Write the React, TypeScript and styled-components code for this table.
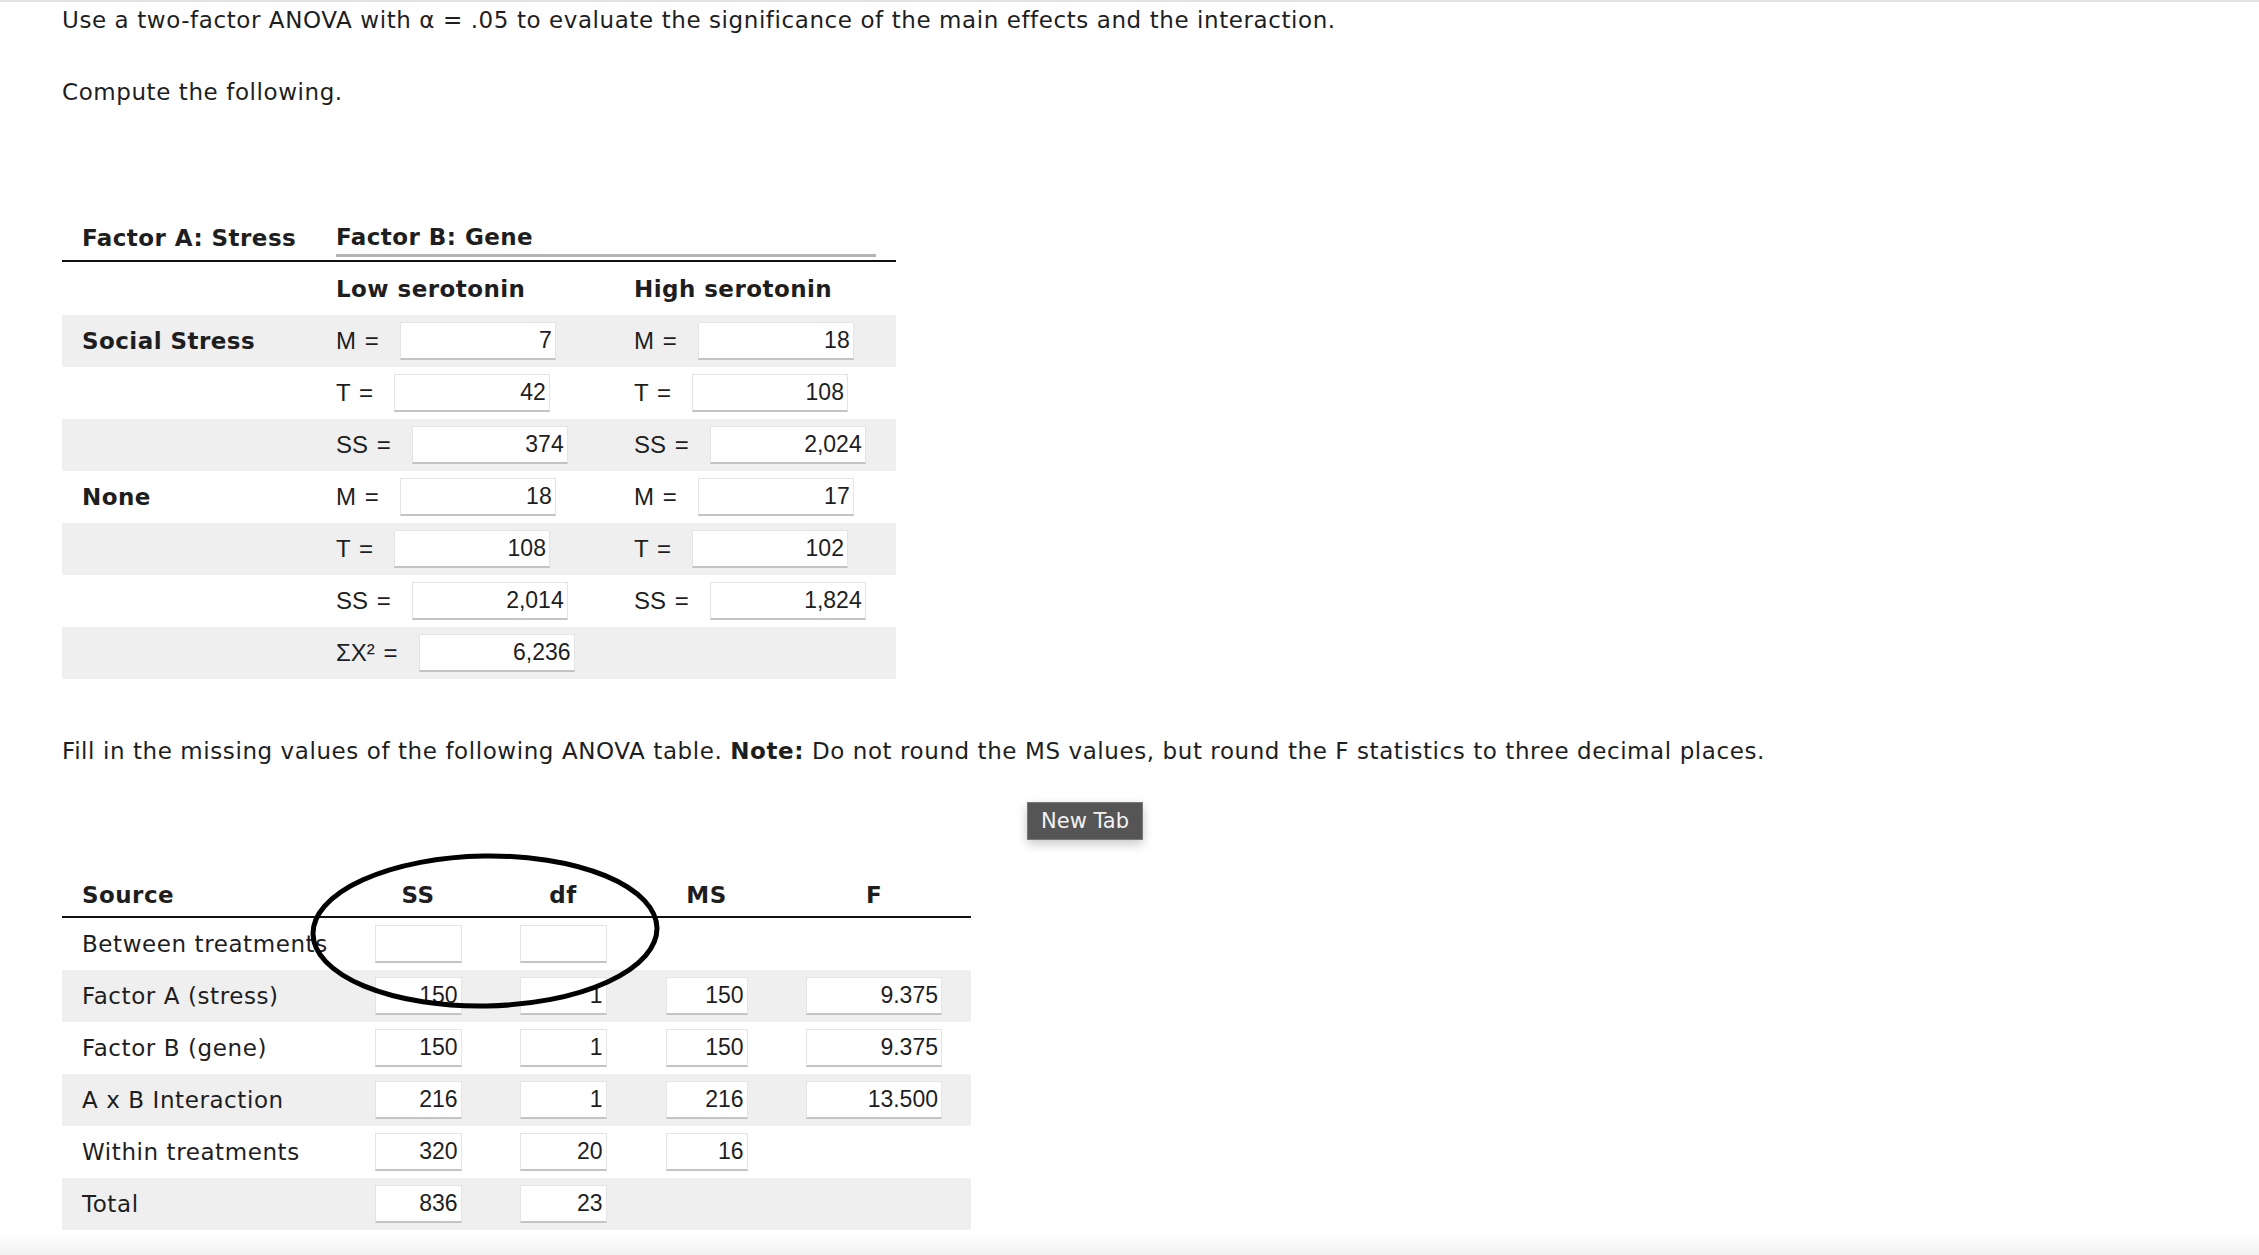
import styled, { createGlobalStyle } from "styled-components";

const GlobalStyle = createGlobalStyle`
  html, body {
    margin: 0;
    padding: 0;
    background: #fff;
  }
  body {
    font-family: "DejaVu Sans", Verdana, sans-serif;
    color: #1e1e1e;
  }
`;

const factorRows = [
  { factor: "Social Stress", label: "M =", low: "7", high: "18", labelHigh: "M =" },
  { factor: "", label: "T =", low: "42", high: "108", labelHigh: "T =" },
  { factor: "", label: "SS =", low: "374", high: "2,024", labelHigh: "SS =" },
  { factor: "None", label: "M =", low: "18", high: "17", labelHigh: "M =" },
  { factor: "", label: "T =", low: "108", high: "102", labelHigh: "T =" },
  { factor: "", label: "SS =", low: "2,014", high: "1,824", labelHigh: "SS =" },
  { factor: "", label: "ΣX² =", low: "6,236", high: null, labelHigh: "" },
];

const anovaRows = [
  { source: "Between treatments", ss: "", df: "", ms: null, f: null },
  { source: "Factor A (stress)", ss: "150", df: "1", ms: "150", f: "9.375" },
  { source: "Factor B (gene)", ss: "150", df: "1", ms: "150", f: "9.375" },
  { source: "A x B Interaction", ss: "216", df: "1", ms: "216", f: "13.500" },
  { source: "Within treatments", ss: "320", df: "20", ms: "16", f: null },
  { source: "Total", ss: "836", df: "23", ms: null, f: null },
];

const App = () => {
  return (
    <>
      <GlobalStyle />
      <Page>
        <Paragraph>
          Use a two-factor ANOVA with α = .05 to evaluate the significance of the main effects and
          the interaction.
        </Paragraph>
        <Paragraph $top={40}>Compute the following.</Paragraph>

        <FactorTable>
          <FactorHeadRow>
            <HeadCell>Factor A: Stress</HeadCell>
            <GeneHead>
              <GeneTitle>Factor B: Gene</GeneTitle>
            </GeneHead>
          </FactorHeadRow>
          <FactorSubRow>
            <span />
            <HeadCell>Low serotonin</HeadCell>
            <HeadCell>High serotonin</HeadCell>
          </FactorSubRow>
          {factorRows.map((row, i) => (
            <FactorRow key={i} $shaded={i % 2 === 0}>
              <HeadCell>{row.factor}</HeadCell>
              <ValueCell>
                <CellLabel>{row.label}</CellLabel>
                <Field $width={156} readOnly value={row.low} />
              </ValueCell>
              <ValueCell>
                {row.high !== null && (
                  <>
                    <CellLabel>{row.labelHigh}</CellLabel>
                    <Field $width={156} readOnly value={row.high} />
                  </>
                )}
              </ValueCell>
            </FactorRow>
          ))}
        </FactorTable>

        <Paragraph $top={56}>
          Fill in the missing values of the following ANOVA table. <strong>Note:</strong> Do not
          round the MS values, but round the F statistics to three decimal places.
        </Paragraph>

        <ButtonRow>
          <TabButton>New Tab</TabButton>
        </ButtonRow>

        <AnovaWrap>
          <AnovaHeadRow>
            <HeadCell>Source</HeadCell>
            <CenterHead>SS</CenterHead>
            <CenterHead>df</CenterHead>
            <CenterHead>MS</CenterHead>
            <CenterHead>F</CenterHead>
          </AnovaHeadRow>
          {anovaRows.map((row, i) => (
            <AnovaRow key={row.source} $shaded={i % 2 === 1}>
              <SourceCell>{row.source}</SourceCell>
              <CenterCell>
                <Field $width={87} readOnly value={row.ss} />
              </CenterCell>
              <CenterCell>
                <Field $width={87} readOnly value={row.df} />
              </CenterCell>
              <CenterCell>
                {row.ms !== null && <Field $width={82} readOnly value={row.ms} />}
              </CenterCell>
              <CenterCell>
                {row.f !== null && <Field $width={136} readOnly value={row.f} />}
              </CenterCell>
            </AnovaRow>
          ))}
          <Circle width="364" height="164" viewBox="0 0 364 164">
            <ellipse
              cx="182"
              cy="82"
              rx="172"
              ry="75"
              fill="none"
              stroke="#000"
              strokeWidth="5"
              transform="rotate(-1 182 82)"
            />
          </Circle>
        </AnovaWrap>
        <BottomFade />
      </Page>
    </>
  );
};

const Page = styled.div`
  border-top: 2px solid #e2e2e2;
  padding: 0 62px;
  min-height: 1253px;
  display: flex;
  flex-direction: column;
`;

const Paragraph = styled.p<{ $top?: number }>`
  margin: ${({ $top }) => $top ?? 2}px 0 0;
  font-size: 23px;
  letter-spacing: 0.58px;
  line-height: 32px;
  white-space: nowrap;

  strong {
    font-weight: bold;
  }
`;

const FactorTable = styled.div`
  margin-top: 108px;
  width: 834px;
`;

const factorCols = `grid-template-columns: 274px 298px 262px;`;

const FactorHeadRow = styled.div`
  display: grid;
  grid-template-columns: 274px 560px;
  height: 46px;
  align-items: center;
  border-bottom: 2px solid #111;
  box-sizing: border-box;
`;

const HeadCell = styled.div`
  font-weight: bold;
  font-size: 23px;
  letter-spacing: 0.45px;
  padding-left: 20px;
  white-space: nowrap;
`;

const GeneHead = styled.div`
  align-self: end;
  padding-bottom: 3px;
  padding-right: 20px;
`;

const GeneTitle = styled.div`
  font-weight: bold;
  font-size: 23px;
  letter-spacing: 0.45px;
  padding-bottom: 4px;
  border-bottom: 3px solid #b4b4b4;
`;

const FactorSubRow = styled.div`
  display: grid;
  ${factorCols}
  height: 53px;
  align-items: center;

  & > div {
    padding-left: 0;
  }
`;

const FactorRow = styled.div<{ $shaded: boolean }>`
  display: grid;
  ${factorCols}
  height: 52px;
  align-items: center;
  background: ${({ $shaded }) => ($shaded ? "#efefef" : "transparent")};
`;

const ValueCell = styled.div`
  display: flex;
  align-items: center;
  gap: 21px;
`;

const CellLabel = styled.span`
  font-family: "Liberation Sans", Arial, sans-serif;
  font-size: 24px;
  word-spacing: 2px;
  white-space: nowrap;
`;

const Field = styled.input<{ $width: number }>`
  width: ${({ $width }) => $width}px;
  height: 38px;
  box-sizing: border-box;
  border: 1px solid #e4e4e4;
  border-bottom: 2px solid #c4c4c4;
  background: #fff;
  text-align: right;
  padding: 0 3px 0 0;
  margin: 0;
  font-family: "Liberation Sans", Arial, sans-serif;
  font-size: 23px;
  color: #1e1e1e;
  outline: none;
`;

const ButtonRow = styled.div`
  display: flex;
  padding-left: 965px;
  margin-top: 35px;
`;

const TabButton = styled.button`
  height: 38px;
  padding: 0 13px;
  background: #555;
  color: #f2f2f2;
  border: 1px solid #777;
  box-shadow: 0 4px 10px rgba(0, 0, 0, 0.22);
  font-family: "DejaVu Sans", Verdana, sans-serif;
  font-size: 21px;
  cursor: pointer;
`;

const AnovaWrap = styled.div`
  position: relative;
  margin-top: 34px;
  width: 909px;
`;

const anovaCols = `grid-template-columns: 284px 144px 146px 141px 194px;`;

const AnovaHeadRow = styled.div`
  display: grid;
  ${anovaCols}
  height: 44px;
  align-items: center;
  border-bottom: 2px solid #111;
  box-sizing: border-box;
`;

const CenterHead = styled.div`
  font-weight: bold;
  font-size: 23px;
  letter-spacing: 0.45px;
  text-align: center;
`;

const AnovaRow = styled.div<{ $shaded: boolean }>`
  display: grid;
  ${anovaCols}
  height: 52px;
  align-items: center;
  background: ${({ $shaded }) => ($shaded ? "#efefef" : "transparent")};
`;

const SourceCell = styled.div`
  font-size: 23px;
  letter-spacing: 0.58px;
  padding-left: 20px;
  white-space: nowrap;
`;

const CenterCell = styled.div`
  display: flex;
  justify-content: center;
`;

const Circle = styled.svg`
  position: absolute;
  left: 241px;
  top: -25px;
  pointer-events: none;
`;

const BottomFade = styled.div`
  margin: auto -62px 0;
  height: 20px;
  background: linear-gradient(to bottom, #fff, #f1f1f1);
`;

export default App;
